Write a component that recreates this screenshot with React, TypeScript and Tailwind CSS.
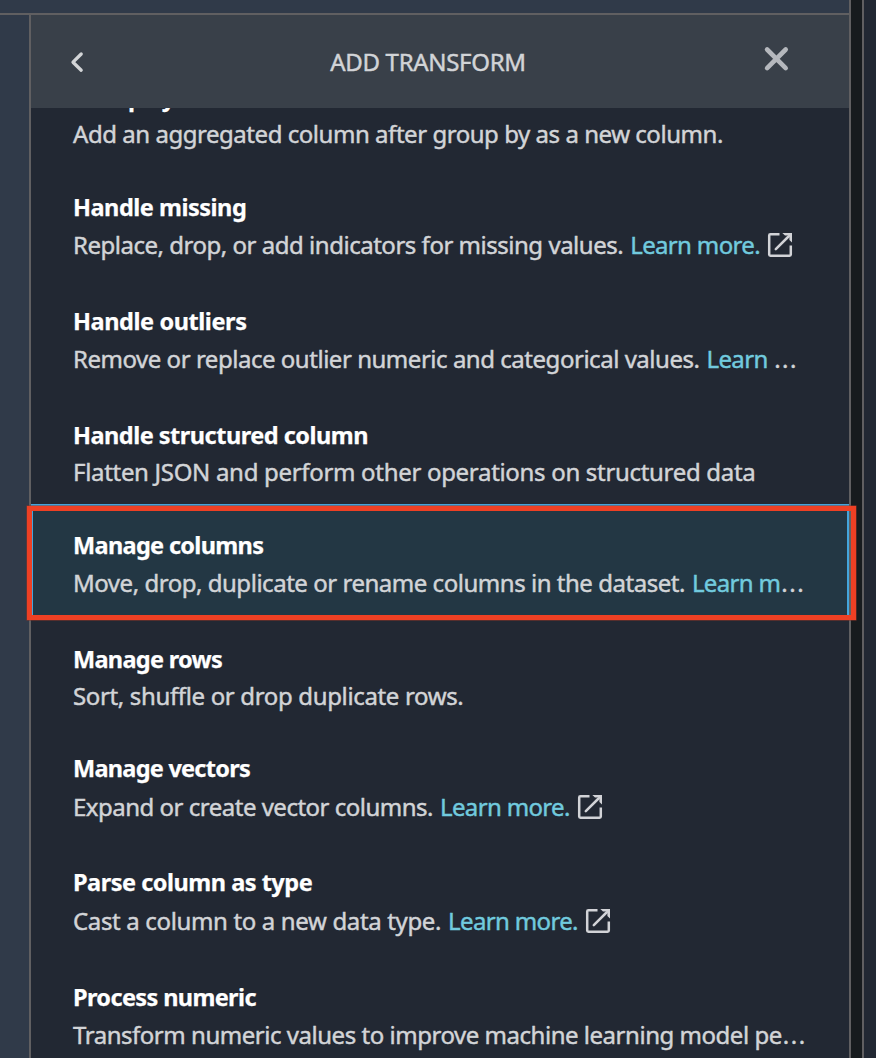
type Transform = {
  title: string;
  titleClass: string;
  description: string;
  descriptionClass: string;
  link?: string;
  truncated?: boolean;
  selected?: boolean;
  rowClass: string;
};

const transforms: Transform[] = [
  {
    title: "Group by",
    titleClass: "tracking-[-0.5px]",
    description: "Add an aggregated column after group by as a new column.",
    descriptionClass: "tracking-[-0.46px]",
    rowClass: "h-[110px] pt-[22px]",
  },
  {
    title: "Handle missing",
    titleClass: "tracking-[-0.48px]",
    description: "Replace, drop, or add indicators for missing values.",
    descriptionClass: "tracking-[-0.48px]",
    link: "Learn more.",
    rowClass: "h-[114px] pt-[22px]",
  },
  {
    title: "Handle outliers",
    titleClass: "tracking-[-0.42px]",
    description: "Remove or replace outlier numeric and categorical values.",
    descriptionClass: "tracking-[-0.47px]",
    link: "Learn ",
    truncated: true,
    rowClass: "h-[114px] pt-[22px]",
  },
  {
    title: "Handle structured column",
    titleClass: "tracking-[-0.5px]",
    description: "Flatten JSON and perform other operations on structured data",
    descriptionClass: "tracking-[-0.31px]",
    rowClass: "h-[110px] pt-[22px]",
  },
  {
    title: "Manage columns",
    titleClass: "tracking-[-0.67px]",
    description: "Move, drop, duplicate or rename columns in the dataset.",
    descriptionClass: "tracking-[-0.47px]",
    link: "Learn m",
    truncated: true,
    selected: true,
    rowClass: "h-[114px] pt-[22px]",
  },
  {
    title: "Manage rows",
    titleClass: "tracking-[-0.7px]",
    description: "Sort, shuffle or drop duplicate rows.",
    descriptionClass: "tracking-[-0.35px]",
    rowClass: "h-[110px] pt-[22px]",
  },
  {
    title: "Manage vectors",
    titleClass: "tracking-[-0.74px]",
    description: "Expand or create vector columns.",
    descriptionClass: "tracking-[-0.5px]",
    link: "Learn more.",
    rowClass: "h-[114px] pt-[21px] [&>div]:pt-px",
  },
  {
    title: "Parse column as type",
    titleClass: "tracking-[-0.49px]",
    description: "Cast a column to a new data type.",
    descriptionClass: "tracking-[-0.35px]",
    link: "Learn more.",
    rowClass: "h-[114px] pt-[21px] [&>div]:pt-px",
  },
  {
    title: "Process numeric",
    titleClass: "tracking-[-0.63px]",
    description: "Transform numeric values to improve machine learning model pe",
    descriptionClass: "tracking-[-0.47px]",
    truncated: true,
    rowClass: "h-[114px] pt-[22px]",
  },
];

function ExternalIcon() {
  return (
    <svg className="ml-[7px] size-[26px] shrink-0" viewBox="0 0 26 26" fill="none" stroke="#d2d3d7" strokeWidth="2.5">
      <path d="M12.5 2.2H3.4Q2.2 2.2 2.2 3.4V22.6Q2.2 23.8 3.4 23.8H22.6Q23.8 23.8 23.8 22.6V13.5" />
      <path d="M8.8 17.2L21.5 4.5" strokeLinecap="round" />
      <path d="M15.3 1H25V10.4L22.4 8V5L21 3.6H18Z" fill="#d2d3d7" stroke="none" />
    </svg>
  );
}

function Row({ item }: { item: Transform }) {
  return (
    <li className={`relative shrink-0 pl-[42px] ${item.rowClass} ${item.selected ? "bg-[#233744]" : ""}`}>
      {item.selected && (
        <>
          <span className="absolute inset-0 border-x-2 border-t-2 border-[#44a5dc]" />
          <span className="absolute top-[2px] -right-[7px] -bottom-[2px] -left-[4px] z-10 border-[5px] border-[#ee4024] shadow-[0_0_0_0.5px_#8c3428]" />
        </>
      )}
      <h3
        className={`h-[38px] text-[23.5px] leading-[38px] font-bold whitespace-nowrap text-white [-webkit-text-stroke:0.25px_currentColor] ${item.titleClass}`}
      >
        {item.title}
      </h3>
      <div
        className={`flex h-[38px] items-center text-[24px] leading-[38px] whitespace-pre text-[#d2d4d7] [-webkit-text-stroke:0.45px_currentColor] ${
          item.link || item.truncated ? "mt-0" : "-mt-px"
        }`}
      >
        <span className={item.descriptionClass}>{item.description}</span>
        {item.link && <a className="ml-[7px] tracking-[-0.65px] text-[#71cade]">{item.link}</a>}
        {item.truncated && <span className="ml-px tracking-[1.5px]">...</span>}
        {item.link && !item.truncated && <ExternalIcon />}
      </div>
    </li>
  );
}

export default function App() {
  return (
    <div className="flex h-[1058px] w-[876px] overflow-hidden bg-[#222833] font-['Noto_Sans','Liberation_Sans',sans-serif]">
      <div className="flex w-[849px] shrink-0 flex-col">
        <div className="h-[15px] shrink-0 border-b-2 border-[#605f61] bg-[#303a49]" />
        <div className="flex min-h-0 grow">
          <div className="w-[31px] shrink-0 border-r-2 border-[#605f61] bg-[#303a49]" />
          <section className="flex w-[818px] flex-col">
            <header className="z-20 flex h-[93px] shrink-0 items-center justify-between bg-[#394049] pr-[60px] pl-[39px]">
              <svg className="size-[22px] shrink-0" viewBox="0 0 22 22" fill="none" stroke="#d3d5d7" strokeWidth="3.3" strokeLinecap="round" strokeLinejoin="round">
                <path d="M11.2 3L3 11.2L11.2 19.2" />
              </svg>
              <h2 className="ml-px text-[24px] tracking-[-0.3px] text-[#d2d4d7] [-webkit-text-stroke:0.45px_currentColor]">
                ADD TRANSFORM
              </h2>
              <svg className="-mt-[6px] size-[26px] shrink-0" viewBox="0 0 26 26" fill="none" stroke="#b5b8bd" strokeWidth="4.6" strokeLinecap="round">
                <path d="M4.1 3.5L22.7 22.1M22.7 3.5L4.1 22.1" />
              </svg>
            </header>
            <div className="min-h-0 grow">
              <ul className="-mt-[52px] flex flex-col">
                {transforms.map((item) => (
                  <Row key={item.title} item={item} />
                ))}
              </ul>
            </div>
          </section>
        </div>
      </div>
      <div className="w-[15px] shrink-0 border-x-2 border-[#605f61] bg-[#171b1e]" />
      <div className="grow bg-[#222833]" />
    </div>
  );
}
